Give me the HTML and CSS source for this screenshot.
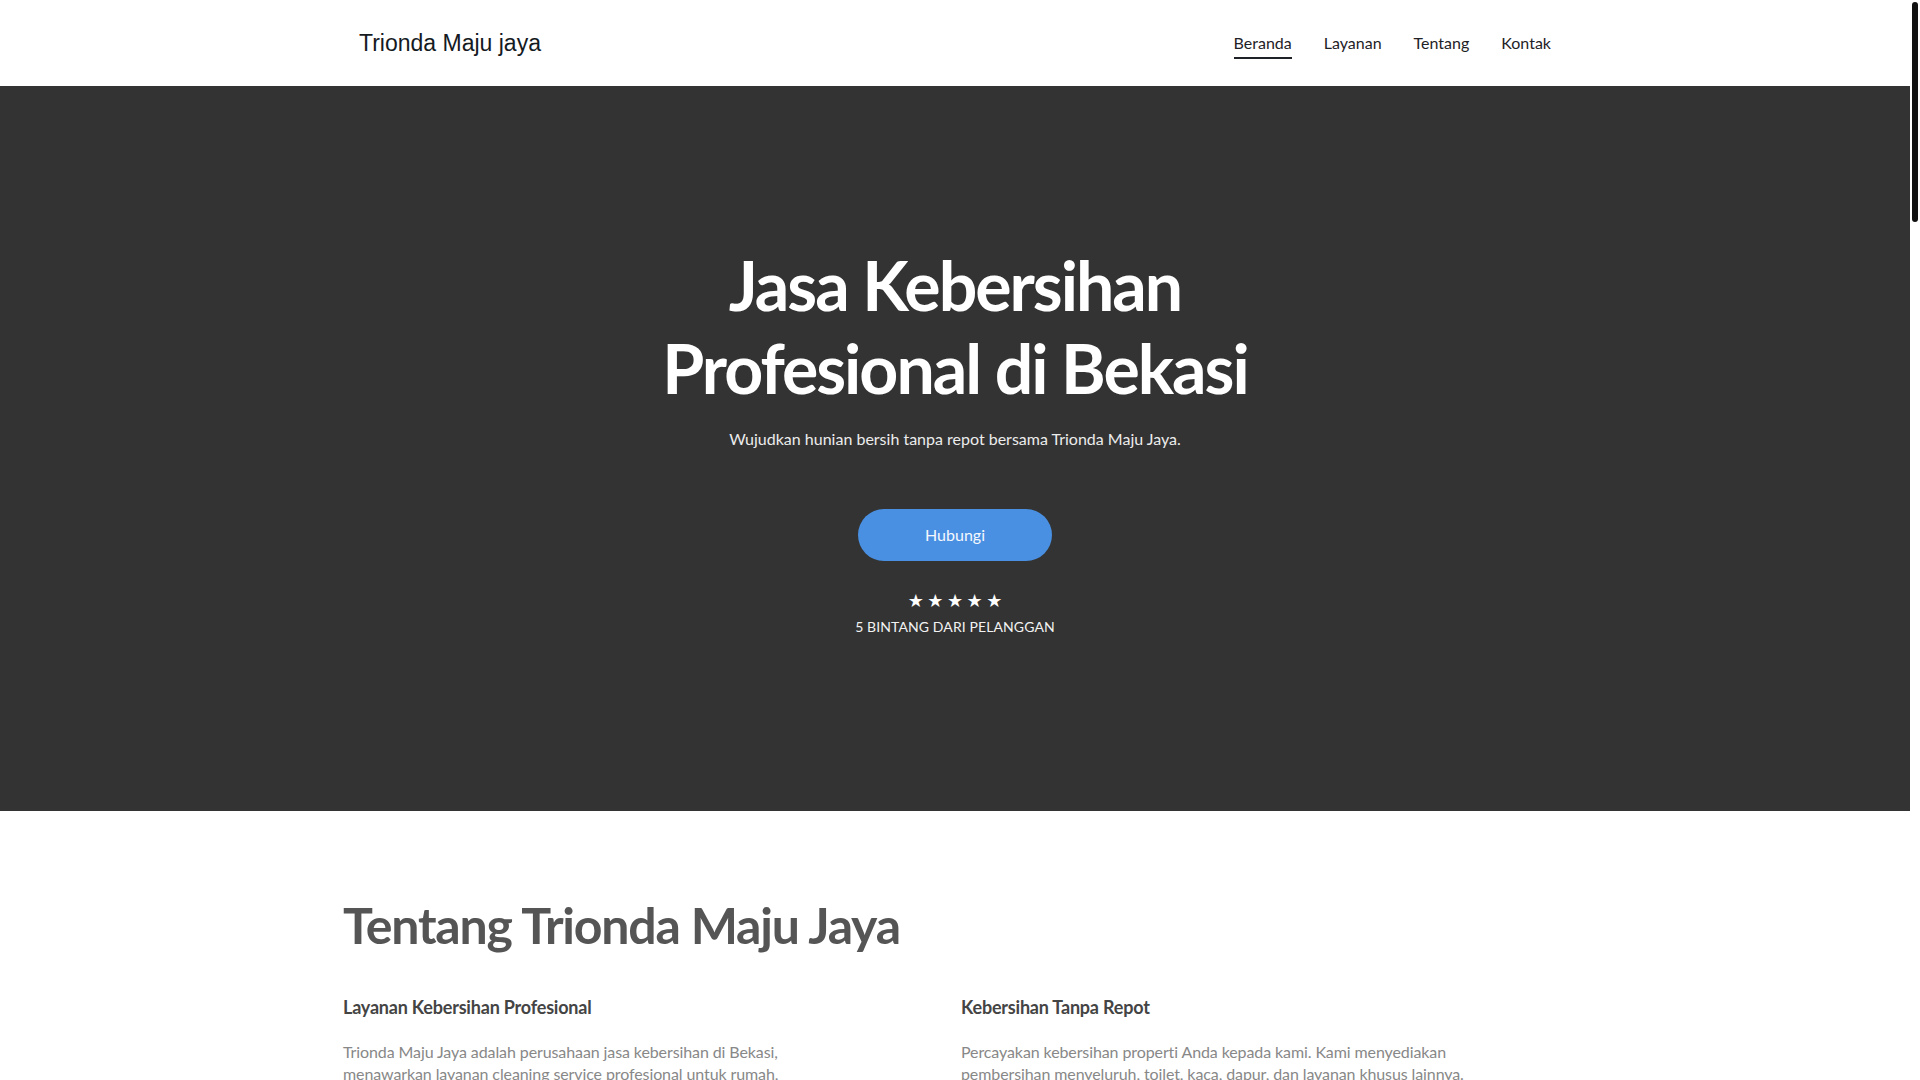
FILE: index.html
```html
<!DOCTYPE html>
<html lang="id">
<head>
<meta charset="utf-8">
<title>Trionda Maju jaya</title>
<link rel="stylesheet" href="styles.css">
</head>
<body>
<div class="page">
  <header class="site-header">
    <div class="header-inner">
      <a class="logo" href="#">Trionda Maju jaya</a>
      <nav class="nav">
        <a class="nav-link active" href="#">Beranda</a>
        <a class="nav-link" href="#">Layanan</a>
        <a class="nav-link" href="#">Tentang</a>
        <a class="nav-link" href="#">Kontak</a>
      </nav>
    </div>
  </header>
  <section class="hero">
    <h1 class="hero-title">Jasa Kebersihan Profesional di Bekasi</h1>
    <p class="hero-sub">Wujudkan hunian bersih tanpa repot bersama Trionda Maju Jaya.</p>
    <a class="hero-btn" href="#">Hubungi</a>
    <div class="stars">★★★★★</div>
    <div class="stars-label">5 BINTANG DARI PELANGGAN</div>
  </section>
  <section class="about">
    <h2 class="about-title">Tentang Trionda Maju Jaya</h2>
    <div class="about-grid">
      <div class="about-col">
        <h3 class="col-title">Layanan Kebersihan Profesional</h3>
        <p class="col-text">Trionda Maju Jaya adalah perusahaan jasa kebersihan di Bekasi, menawarkan layanan cleaning service profesional untuk rumah, perkantoran, dan apartemen dengan tenaga kerja terlatih.</p>
      </div>
      <div class="about-col">
        <h3 class="col-title">Kebersihan Tanpa Repot</h3>
        <p class="col-text">Percayakan kebersihan properti Anda kepada kami. Kami menyediakan pembersihan menyeluruh, toilet, kaca, dapur, dan layanan khusus lainnya. Harga terjangkau dan hasil memuaskan.</p>
      </div>
    </div>
  </section>
</div>
<div class="scrollbar"><div class="scroll-thumb"></div></div>
</body>
</html>
```
FILE: styles.css
```css
html, body {
  margin: 0;
  padding: 0;
}
body {
  font-family: Lato, "Noto Sans", sans-serif;
  background: #fff;
  color: #1e2226;
}
.page {
  margin-right: 10px;
}
a {
  text-decoration: none;
}
.site-header {
  background: #fff;
  height: 86px;
}
.header-inner {
  max-width: 1224px;
  margin: 0 auto;
  padding: 2px 16px 0;
  box-sizing: border-box;
  height: 86px;
  display: flex;
  align-items: center;
  justify-content: space-between;
}
.logo {
  font-family: "Liberation Sans", Arial, sans-serif;
  font-size: 23px;
  color: #151a1f;
  padding-bottom: 1px;
}
.nav {
  display: flex;
  gap: 32px;
  padding-top: 3px;
}
.nav-link {
  font-size: 16px;
  line-height: 20px;
  color: #1e2226;
  padding-bottom: 4px;
  border-bottom: 2px solid transparent;
}
.nav-link.active {
  border-bottom-color: #1e2226;
}
.hero {
  background: #333333;
  height: 725px;
  box-sizing: border-box;
  padding-top: 157px;
  text-align: center;
  display: flex;
  flex-direction: column;
  align-items: center;
}
.hero-title {
  margin: 0;
  max-width: 700px;
  font-size: 68px;
  line-height: 83px;
  font-weight: 700;
  letter-spacing: -2px;
  color: #ffffff;
}
.hero-sub {
  margin: 18px 0 0;
  font-size: 16px;
  line-height: 24px;
  color: #ececec;
}
.hero-btn {
  margin-top: 58px;
  width: 194px;
  height: 52px;
  line-height: 52px;
  border-radius: 26px;
  background: #4a90e2;
  color: #f4f8fd;
  font-size: 16px;
}
.stars {
  margin-top: 30px;
  font-family: "DejaVu Sans", sans-serif;
  font-size: 18px;
  line-height: 20px;
  letter-spacing: 3.5px;
  padding-left: 3.5px;
  color: #ffffff;
}
.stars-label {
  margin-top: 6px;
  font-size: 14px;
  line-height: 20px;
  letter-spacing: 0.1px;
  color: #f2f2f2;
}
.about {
  max-width: 1224px;
  margin: 0 auto;
  padding: 83px 0 120px;
}
.about-title {
  margin: 0;
  font-size: 50px;
  line-height: 62px;
  font-weight: 700;
  letter-spacing: -1.2px;
  color: #555555;
}
.about-grid {
  display: grid;
  grid-template-columns: 1fr 1fr;
  column-gap: 12px;
  margin-top: 40px;
}
.col-title {
  margin: 0;
  font-size: 18px;
  line-height: 23px;
  font-weight: 700;
  letter-spacing: -0.2px;
  color: #444444;
}
.col-text {
  margin: 22px 0 0;
  max-width: 505px;
  font-size: 16px;
  line-height: 22px;
  letter-spacing: -0.1px;
  color: #888888;
}
.scrollbar {
  position: fixed;
  top: 0;
  right: 0;
  width: 10px;
  height: 100%;
  background: #ffffff;
}
.scroll-thumb {
  margin: 2px 0 0 2px;
  width: 6px;
  height: 220px;
  border-radius: 3px;
  background: #111111;
}
```
